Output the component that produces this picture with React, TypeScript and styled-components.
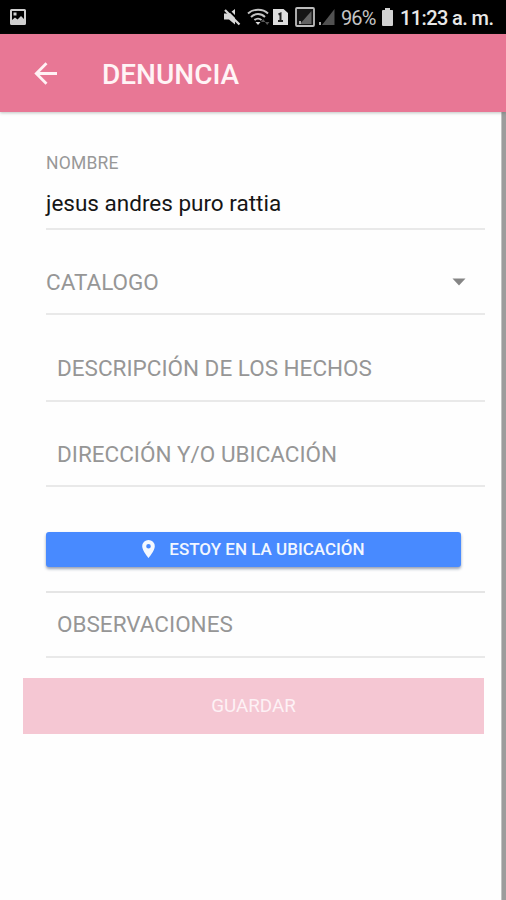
import React from "react";
import styled, { createGlobalStyle } from "styled-components";

const GlobalStyle = createGlobalStyle`
  * { box-sizing: border-box; }
  body { margin: 0; background: #fefefe; font-family: Roboto, "Liberation Sans", sans-serif; }
`;

const Screen = styled.div`
  width: 506px;
  height: 900px;
  display: flex;
  flex-direction: column;
  overflow: hidden;
  background: #fefefe;
`;

const StatusBar = styled.div`
  height: 34px;
  flex: none;
  display: flex;
  align-items: center;
  padding: 0 12px 0 9px;
  background: #000;
  color: #dcdcdc;
`;

const StatusIcon = styled.svg<{ $gap?: number }>`
  flex: none;
  display: block;
  margin-left: ${(p) => p.$gap ?? 0}px;
`;

const StatusText = styled.span<{ $gap: number; $width: number; $bold?: boolean }>`
  flex: none;
  width: ${(p) => p.$width}px;
  margin-left: ${(p) => p.$gap}px;
  padding-top: 1px;
  font-size: 20px;
  font-weight: ${(p) => (p.$bold ? 500 : 400)};
  letter-spacing: ${(p) => (p.$bold ? -0.6 : -0.9)}px;
  line-height: 24px;
  white-space: nowrap;
  color: ${(p) => (p.$bold ? "#e8e8e8" : "#c4c4c4")};
`;

const Toolbar = styled.header`
  height: 78px;
  flex: none;
  display: flex;
  align-items: center;
  padding-left: 34px;
  background: #e87795;
  z-index: 1;
  box-shadow: 0 1px 3px rgba(70, 90, 80, 0.35);
`;

const Title = styled.h1`
  margin: 4px 0 0 44px;
  font-size: 28px;
  font-weight: 500;
  letter-spacing: 0;
  line-height: 34px;
  color: #fff4f6;
`;

const Body = styled.main`
  flex: 1;
  display: flex;
`;

const Form = styled.form`
  flex: 1;
  padding-right: 17px;
  display: flex;
  flex-direction: column;
`;

const ScrollTrack = styled.div`
  width: 5px;
  background: #9c9c9c;
  border-left: 1px solid #c2c2c2;
`;

const Field = styled.div<{ $height: number; $indent?: boolean; $bottom: number }>`
  height: ${(p) => p.$height}px;
  flex: none;
  margin: 0 -1px 0 46px;
  padding: 0 19px ${(p) => p.$bottom}px ${(p) => (p.$indent ? 11 : 0)}px;
  display: flex;
  align-items: flex-end;
  justify-content: space-between;
  border-bottom: 2px solid #e9e9e9;
`;

const NamedField = styled(Field)`
  flex-direction: column;
  align-items: flex-start;
  justify-content: flex-end;
  gap: 14px;
`;

const FieldLabel = styled.label`
  font-size: 17.5px;
  line-height: 24px;
  letter-spacing: 0.2px;
  color: #989898;
`;

const FieldValue = styled.span`
  font-size: 22.5px;
  line-height: 28px;
  color: #151515;
`;

const Placeholder = styled.span`
  font-size: 22.5px;
  line-height: 28px;
  white-space: nowrap;
  color: #969696;
`;

const Caret = styled.svg`
  display: block;
  margin-bottom: 10px;
`;

const LocationRow = styled.div`
  height: 106px;
  flex: none;
  margin: 0 -1px 0 46px;
  padding: 45px 24px 0 0;
  border-bottom: 2px solid #e5e5e5;
`;

const LocationButton = styled.button`
  width: 100%;
  height: 35px;
  display: flex;
  align-items: center;
  justify-content: center;
  gap: 14px;
  padding: 0 0 1px;
  border: 0;
  border-radius: 3px;
  background: #488aff;
  box-shadow: 0 2px 3px rgba(30, 50, 90, 0.45);
  color: #f2f7ff;
  font: 500 17px/24px Roboto, sans-serif;
`;

const SaveButton = styled.button`
  height: 56px;
  flex: none;
  margin: 20px 0 0 23px;
  padding: 0;
  border: 0;
  background: #f5c7d3;
  color: #fdf1f5;
  font: 400 18.8px/24px Roboto, sans-serif;
`;

export default function App() {
  return (
    <>
      <GlobalStyle />
      <Screen>
        <StatusBar>
          <StatusIcon width="18" height="18" viewBox="0 0 18 18">
            <path fill="#cfcfcf" fillRule="evenodd" d="M2.500 1h13A1.500 1.500 0 0 1 17 2.500v13a1.500 1.500 0 0 1-1.500 1.500h-13A1.500 1.500 0 0 1 1 15.500v-13A1.500 1.500 0 0 1 2.500 1zM3 3v9l3-2.500 2.500 2L12 8l3 3V3zM4.500 4.500h3v3h-3z" />
          </StatusIcon>
          <StatusIcon $gap={196} width="18" height="18" viewBox="0 0 18 18">
            <path fill="#d8d8d8" d="M1 5.500h5l6-4.500v15.500l-6-5H1z" />
            <path stroke="#000" strokeWidth="2" d="M3.500 0l14 14" />
            <path stroke="#d8d8d8" strokeWidth="2.200" d="M2 2l14.500 14.500" />
          </StatusIcon>
          <StatusIcon $gap={6} width="24" height="18" viewBox="0 0 24 18" fill="none">
            <g stroke="#c4c4c4" strokeWidth="1.900">
              <path d="M1 5.500C6 .5 16 .5 21 5.500M4 9c4-4 10-4 14 0M7.500 12.200c2-2 5-2 7 0" />
            </g>
            <path fill="#ddd" d="M8.500 14h5L11 17z" />
            <path fill="#555" d="M14 14l2.200-3 2.200 3zM18 14h4.400l-2.200 3z" />
          </StatusIcon>
          <StatusIcon $gap={2} width="15" height="18" viewBox="0 0 15 18">
            <path fill="#dedede" d="M0 1h10.500L15 5v12H0z" />
            <path stroke="#222" strokeWidth="2" fill="none" d="M5.500 6.500l2-1V13M5 13h5" />
          </StatusIcon>
          <StatusIcon $gap={6} width="22" height="22" viewBox="0 0 22 22">
            <rect x="2" y="2" width="18" height="18" rx="1" fill="#151515" stroke="#bdbdbd" strokeWidth="1.800" />
            <path fill="#636363" d="M17.500 5v13H6z" />
            <path fill="#aaa" d="M5 15h2v3H5z" />
          </StatusIcon>
          <StatusIcon $gap={2} width="18" height="20" viewBox="0 0 18 20">
            <path fill="#515151" d="M16.500 2v16H4z" />
            <path fill="#aaa" d="M1 15h2v3H1z" />
          </StatusIcon>
          <StatusText $gap={5} $width={36}>96%</StatusText>
          <StatusIcon $gap={4} width="13" height="18" viewBox="0 0 13 18">
            <path fill="#d2d2d2" d="M4 0h5v2h2.500Q12 2 12 3v14q0 1-1 1H2q-1 0-1-1V3q0-1 1-1h2z" />
          </StatusIcon>
          <StatusText $gap={6} $width={94} $bold>11:23 a. m.</StatusText>
        </StatusBar>
        <Toolbar>
          <svg width="24" height="24" viewBox="0 0 24 24" fill="none" stroke="#fff2f5" strokeWidth="2.800">
            <path d="M23 12.500H3M12.500 2.300L2.300 12.500l10.200 10.200" />
          </svg>
          <Title>DENUNCIA</Title>
        </Toolbar>
        <Body>
          <Form>
            <NamedField $height={118} $bottom={11}>
              <FieldLabel>NOMBRE</FieldLabel>
              <FieldValue>jesus andres puro rattia</FieldValue>
            </NamedField>
            <Field $height={85} $bottom={17}>
              <Placeholder>CATALOGO</Placeholder>
              <Caret width="14" height="8" viewBox="0 0 14 8">
                <path fill="#858585" d="M.5.500h13L7 7.500z" />
              </Caret>
            </Field>
            <Field $height={87} $bottom={18} $indent>
              <Placeholder>DESCRIPCIÓN DE LOS HECHOS</Placeholder>
            </Field>
            <Field $height={85} $bottom={17} $indent>
              <Placeholder>DIRECCIÓN Y/O UBICACIÓN</Placeholder>
            </Field>
            <LocationRow>
              <LocationButton type="button">
                <svg width="13" height="18" viewBox="0 0 13 18">
                  <path fill="#f5f9ff" fillRule="evenodd" d="M6.500 0A6.300 6.300 0 0 0 .2 6.300C.2 11 6.500 18 6.500 18s6.300-7 6.300-11.700A6.300 6.300 0 0 0 6.500 0zm0 4a2.300 2.300 0 1 1 0 4.600 2.300 2.300 0 0 1 0-4.600z" />
                </svg>
                <span>ESTOY EN LA UBICACIÓN</span>
              </LocationButton>
            </LocationRow>
            <Field $height={65} $bottom={18} $indent>
              <Placeholder>OBSERVACIONES</Placeholder>
            </Field>
            <SaveButton type="button">GUARDAR</SaveButton>
          </Form>
          <ScrollTrack />
        </Body>
      </Screen>
    </>
  );
}
